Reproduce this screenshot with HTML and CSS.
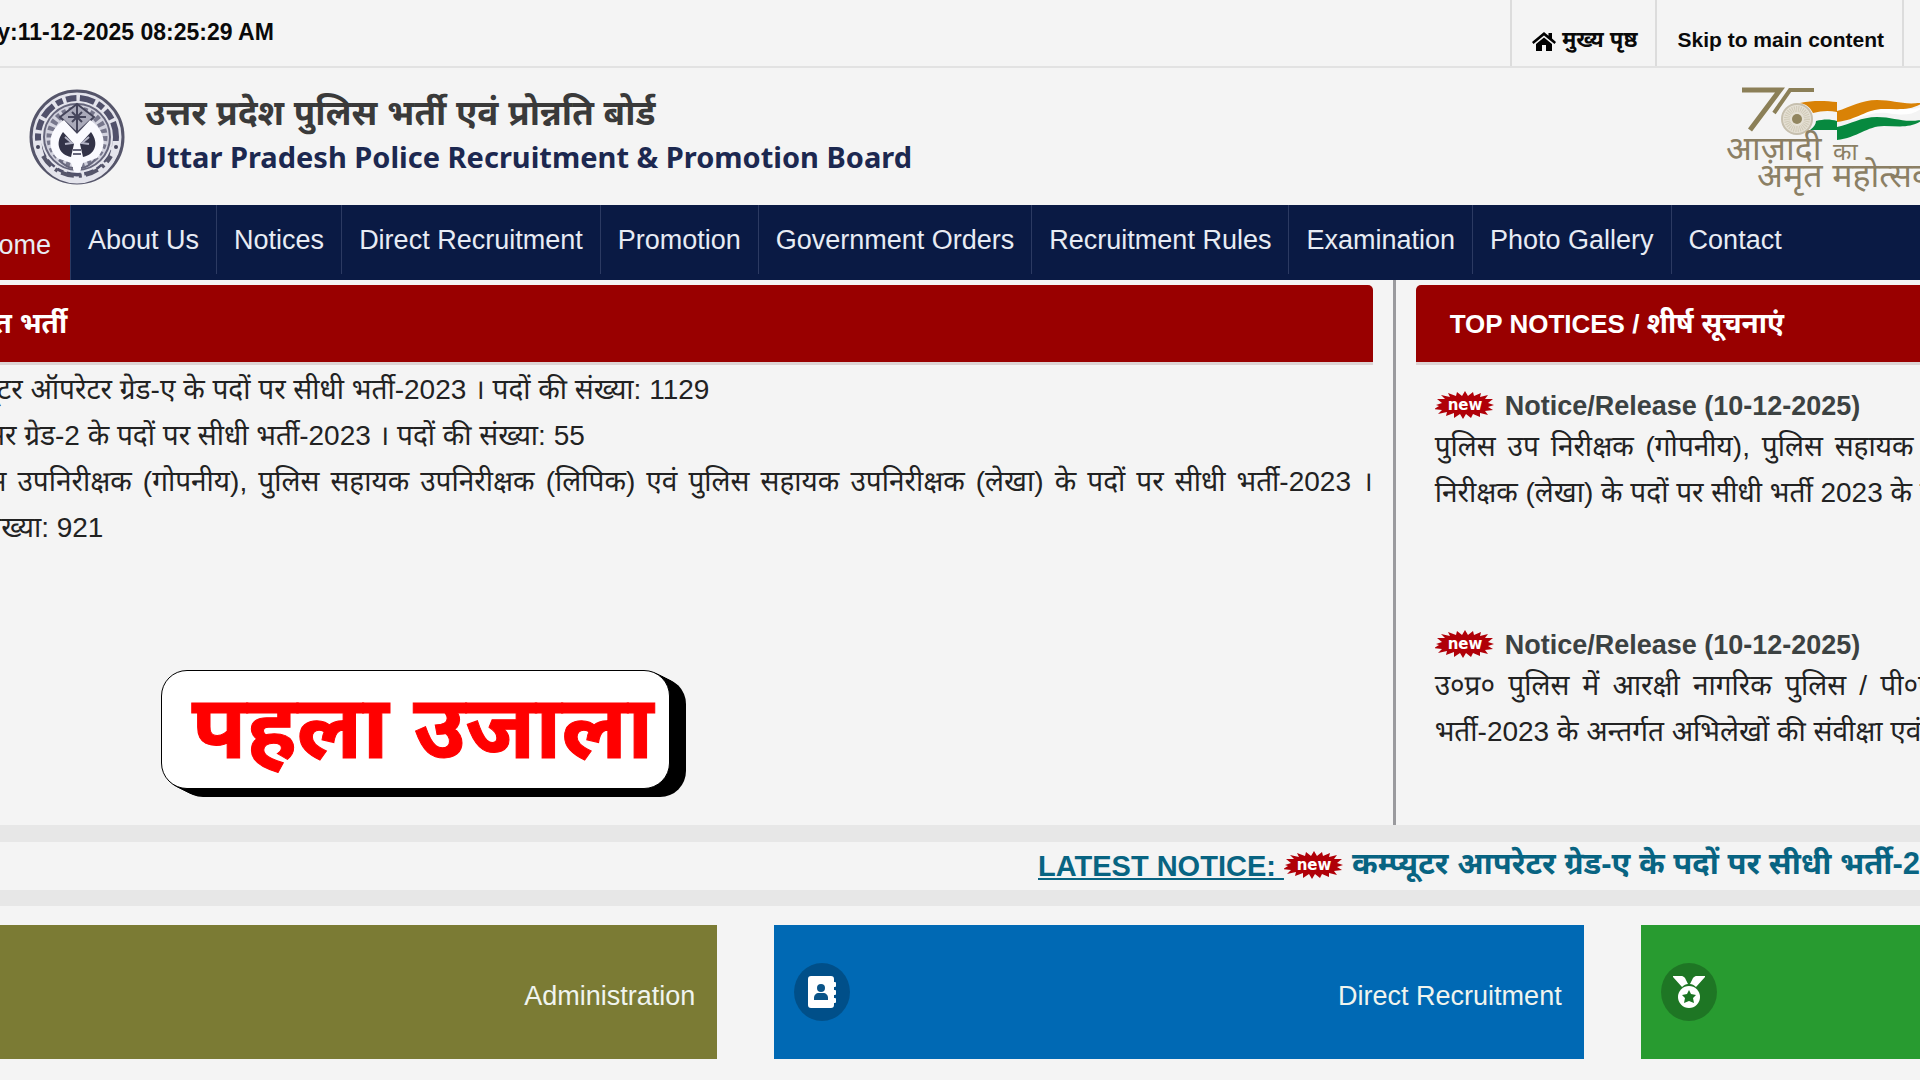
FILE: index.html
```html
<!DOCTYPE html>
<html lang="hi">
<head>
    <meta charset="UTF-8">
    <meta name="viewport" content="width=device-width, initial-scale=1.0">
    <title>Uttar Pradesh Police Recruitment &amp; Promotion Board</title>
    <link rel="stylesheet" href="styles.css">
</head>
<body>
    <!-- Shared "new" sticker -->
    <svg class="sprite" aria-hidden="true">
        <symbol id="new-badge" viewBox="0 0 60 30">
            <path fill="#b00008" d="M1 14l6-2-5-4 8 0-4-4 9 2-2-4 8 3 1-4 5 4 3-5 3 5 5-4 1 4 7-3-1 4 8-2-3 4 8 0-5 4 6 2-6 2 5 3-8 1 3 4-8-2 0 4-7-3-2 4-5-4-3 5-3-5-6 4 0-5-8 3 1-4-9 2 4-4-8-1 5-3z"/>
            <text x="30" y="19" text-anchor="middle" fill="#fff" font-family="DejaVu Sans" font-size="15">new</text>
        </symbol>
    </svg>

    <div class="page">
        <!-- Top Bar -->
        <div class="top-bar">
            <span class="today">Today:11-12-2025 08:25:29 AM</span>
            <div class="top-links">
                <a class="home-link" href="#">
                    <svg width="24" height="20" viewBox="0 0 24 20" aria-hidden="true">
                        <path d="M12 1L0 11l1.500 2L12 4.500 22.500 13 24 11l-4-3.400V2h-3.500v2.800z"/>
                        <path d="M12 6.500L4 13v7h6v-6h4v6h6v-7z"/>
                    </svg>
                    मुख्य पृष्ठ
                </a>
                <a href="#main">Skip to main content</a>
            </div>
        </div>

        <!-- Header -->
        <header class="header">
            <svg class="emblem" viewBox="0 0 96 96" role="img" aria-label="Board emblem">
                <circle cx="48" cy="48" r="46" fill="#e4e4ec" stroke="#55556a" stroke-width="3"/>
                <circle cx="48" cy="48" r="39" fill="none" stroke="#50506a" stroke-width="6" stroke-dasharray="9 3 13 3 6 3" pathLength="210"/>
                <path d="M9 52a39 39 0 0 0 78 0" fill="none" stroke="#e4e4ec" stroke-width="7"/>
                <path d="M14 67a39 39 0 0 0 68 0" fill="none" stroke="#55556a" stroke-width="4" stroke-dasharray="13 5 3 4"/>
                <circle cx="9" cy="58" r="2" fill="#44445a"/>
                <circle cx="87" cy="58" r="2" fill="#44445a"/>
                <circle cx="48" cy="48" r="33" fill="#d2d2de" stroke="#66667c" stroke-width="2"/>
                <circle cx="48" cy="48" r="27" fill="none" stroke="#77778c" stroke-width="7" stroke-dasharray="4 3"/>
                <path d="M48 15l17 13-17 16-17-16z" fill="#aaaaba" stroke="#44445a" stroke-width="2"/>
                <path d="M48 15v29M39 28h18M43 23l10 10M53 23L43 33" stroke="#44445a" stroke-width="2"/>
                <path d="M35 31c-15 10-18 26-7 38l14 5 3 9h6l3-9 14-5c11-12 8-28-7-38l-13 14z" fill="#fafaff"/>
                <path d="M34 43c-9 12-3 23 8 25l3-13zM62 43c9 12 3 23-8 25l-3-13z" fill="#333348"/>
                <path d="M36 48l7 6-7 1M60 48l-7 6 7 1" stroke="#b4b4c6" stroke-width="2" fill="none"/>
                <path d="M30 71c6 6 11 8 14 8M66 71c-6 6-11 8-14 8M44 61h8M44 65h8" stroke="#66667c" stroke-width="2" fill="none"/>
            </svg>
            <div class="board-name">
                <h1>उत्तर प्रदेश पुलिस भर्ती एवं प्रोन्नति बोर्ड</h1>
                <h2>Uttar Pradesh Police Recruitment &amp; Promotion Board</h2>
            </div>
            <svg class="amrit" viewBox="0 -6 240 116" role="img" aria-label="आज़ादी का अमृत महोत्सव">
                <path d="M16 5h38L24 45" fill="none" stroke="#8b7f57" stroke-width="5"/>
                <path d="M48 28L64 5h24" fill="none" stroke="#8b7f57" stroke-width="4"/>
                <circle cx="71" cy="34" r="15" fill="#e5e0d4" stroke="#c6bfae" stroke-width="2"/>
                <circle cx="71" cy="34" r="10" fill="none" stroke="#d0cab8" stroke-width="6" stroke-dasharray="1 1"/>
                <circle cx="71" cy="34" r="5" fill="#91855f"/>
                <path d="M74 18c14-3 26-2 37-1v10c-9-2-16-1-24 1-3-6-7-9-13-10z" fill="#d98206"/>
                <path d="M111 36c18-2 28-14 50-14 14 0 23 5 37-1-9 9-20 10-37 7-18-2-28 8-50 8z" fill="#fff"/>
                <path d="M111 26c14-4 24-11 40-11 18 0 28 6 47 2-12 9-25 7-40 7-18 0-27 11-47 13z" fill="#d98206"/>
                <path d="M90 36c8-2 14-2 21 0v9H84c4-3 6-6 6-9z" fill="#07893f"/>
                <path d="M111 42c14-3 24-10 40-10 18 0 28 7 47 2-12 10-25 7-40 7-17 0-27 12-47 14z" fill="#07893f"/>
                <text x="0" y="75" class="amrit-text">आज़ादी</text>
                <text x="107" y="75" class="amrit-small">का</text>
                <text x="31" y="102" class="amrit-text">अमृत महोत्सव</text>
            </svg>
        </header>

        <!-- Main Navigation -->
        <nav class="nav">
            <a class="active" href="#">Home</a>
            <a href="#">About Us</a>
            <a href="#">Notices</a>
            <a href="#">Direct Recruitment</a>
            <a href="#">Promotion</a>
            <a href="#">Government Orders</a>
            <a href="#">Recruitment Rules</a>
            <a href="#">Examination</a>
            <a href="#">Photo Gallery</a>
            <a href="#">Contact</a>
        </nav>

        <!-- Recruitment and Notices -->
        <main class="main" id="main">
            <section class="recruitment">
                <h3><span>प्रचलित भर्ती</span></h3>
                <p>(1) कम्प्यूटर ऑपरेटर ग्रेड-ए के पदों पर सीधी भर्ती-2023 । पदों की संख्या: 1129</p>
                <p>(2) प्रोग्रामर ग्रेड-2 के पदों पर सीधी भर्ती-2023 । पदों की संख्या: 55</p>
                <p>(3) पुलिस उपनिरीक्षक (गोपनीय), पुलिस सहायक उपनिरीक्षक (लिपिक) एवं पुलिस सहायक उपनिरीक्षक (लेखा) के पदों पर सीधी भर्ती-2023 । <span class="posts">पदों की संख्या: 921</span></p>
                <div class="watermark">पहला उजाला</div>
            </section>

            <section class="notices">
                <h3>TOP NOTICES / <span>शीर्ष सूचनाएं</span></h3>
                <article class="notice">
                    <h4><svg class="new"><use href="#new-badge"/></svg>Notice/Release (10-12-2025)</h4>
                    <p>
                        <span class="line">पुलिस उप निरीक्षक (गोपनीय), पुलिस सहायक उप निरीक्षक (लिपिक) / पुलिस सहायक उप</span>
                        निरीक्षक (लेखा) के पदों पर सीधी भर्ती 2023 के सम्बन्ध में।
                    </p>
                </article>
                <article class="notice">
                    <h4><svg class="new"><use href="#new-badge"/></svg>Notice/Release (10-12-2025)</h4>
                    <p>
                        <span class="line">उ०प्र० पुलिस में आरक्षी नागरिक पुलिस / पी०ए०सी० एवं फायरमैन के कुल पदों पर सीधी</span>
                        भर्ती-2023 के अन्तर्गत अभिलेखों की संवीक्षा एवं शारीरिक परीक्षा।
                    </p>
                </article>
            </section>
        </main>

        <!-- Latest Notice -->
        <div class="latest">
            <a href="#">LATEST NOTICE: </a>
            <svg class="new"><use href="#new-badge"/></svg>
            <span>कम्प्यूटर आपरेटर ग्रेड-ए के पदों पर सीधी भर्ती-2023</span>
        </div>

        <!-- Tiles -->
        <div class="tiles">
            <a class="tile olive" href="#">
                <span>Administration</span>
            </a>
            <a class="tile blue" href="#">
                <i class="tile-icon">
                    <svg width="28" height="32" viewBox="0 0 28 32" aria-hidden="true">
                        <path fill="#fff" d="M3 0h20a3 3 0 0 1 3 3v3h1a1 1 0 0 1 1 1v3a1 1 0 0 1-1 1h-1v3h1a1 1 0 0 1 1 1v3a1 1 0 0 1-1 1h-1v3h1a1 1 0 0 1 1 1v3a1 1 0 0 1-1 1h-1v2a3 3 0 0 1-3 3H3a3 3 0 0 1-3-3V3a3 3 0 0 1 3-3z"/>
                        <circle cx="13" cy="12" r="4" fill="#0a5488"/>
                        <path fill="#0a5488" d="M6 24v-2c0-3 2-5 5-5h4c3 0 5 2 5 5v2z"/>
                    </svg>
                </i>
                <span>Direct Recruitment</span>
            </a>
            <a class="tile green" href="#">
                <i class="tile-icon">
                    <svg width="32" height="32" viewBox="0 0 32 32" aria-hidden="true">
                        <path fill="#fff" d="M0 0h9c1 0 2 1 3 2l3 6c-2 0-4 1-6 3L0 1zM32 0h-9c-1 0-2 1-3 2l-3 6c2 0 4 1 6 3l9-10z"/>
                        <circle cx="16" cy="21" r="11" fill="#fff"/>
                        <path fill="#1b7423" d="M16 14l2 4 5 1-3 3 1 5-5-2-5 2 1-5-3-3 5-1z"/>
                    </svg>
                </i>
                <span>Examination</span>
            </a>
        </div>
    </div>
</body>
</html>
```
FILE: styles.css
```css
/* General Body Styling */
* {
    box-sizing: border-box;
}

body {
    margin: 0;
    overflow: hidden;
    background-color: #f4f4f4;
    font-family: "Liberation Sans", "Noto Sans Devanagari", "Noto Sans", sans-serif;
    font-size: 28px;
    color: #222;
}

h1, h2, h3, h4, p {
    margin: 0;
}

a {
    color: inherit;
    text-decoration: none;
}

.sprite {
    display: none;
}

/* The page is wider than the window on both sides */
.page {
    margin: 0 -544px 0 -100px;
}

/* Top Bar */
.top-bar {
    display: flex;
    justify-content: space-between;
    height: 68px;
    padding: 0 560px 0 44px;
    border-bottom: 2px solid #e2e2e2;
    font-weight: bold;
    color: #0a0a0a;
}

.today {
    font-size: 23px;
    line-height: 64px;
}

.top-links {
    display: flex;
    border-right: 2px solid #dcdcdc;
    font-size: 21px;
}

.top-links a {
    display: flex;
    align-items: center;
    gap: 6px;
    padding: 14px 18px 0 20px;
    border-left: 2px solid #dcdcdc;
}

.top-links .home-link {
    padding-top: 16px;
    font-size: 22px;
}

/* Header */
.header {
    display: flex;
    align-items: center;
    height: 137px;
    padding: 0 498px 0 129px;
}

.emblem {
    width: 96px;
    height: 96px;
}

.board-name {
    flex: 1;
    margin-left: 20px;
    padding-bottom: 6px;
}

.board-name h1 {
    font-size: 35px;
    line-height: 46px;
    color: #3a3a3a;
}

.board-name h2 {
    font-family: "Noto Sans", sans-serif;
    font-size: 29px;
    line-height: 42px;
    color: #1c2850;
}

.amrit {
    width: 240px;
    height: 116px;
    overflow: visible;
}

.amrit-text {
    font-size: 34px;
    fill: #8b7f64;
}

.amrit-small {
    font-size: 24px;
    fill: #8b7f64;
}

/* Navigation */
.nav {
    display: flex;
    height: 75px;
    padding-left: 62px;
    background-color: #0a1a44;
    color: #e8ecf4;
    font-size: 27px;
    line-height: 70px;
}

.nav a {
    padding: 0 17px;
    margin-bottom: 6px;
    border-right: 1px solid #2c3a62;
}

.nav a:last-child {
    border-right: none;
}

.nav .active {
    margin-bottom: 0;
    padding-right: 19px;
    background-color: #990000;
    line-height: 80px;
}

/* Recruitment and Notices */
.main {
    display: grid;
    grid-template-columns: 7fr 5fr;
    height: 545px;
}

.main h3 {
    height: 77px;
    border-radius: 5px 5px 0 0;
    box-shadow: 0 3px 0 #dcd4d4;
    background-color: #990000;
    color: #fff;
    font-size: 26px;
    line-height: 77px;
}

.main h3 span {
    font-size: 28px;
}

.main p {
    line-height: 46px;
    text-align: justify;
}

.recruitment {
    position: relative;
    padding: 5px 20px 0 0;
    border-right: 3px solid #9a9a9e;
}

.recruitment h3 {
    margin-bottom: 5px;
    padding-left: 29px;
}

.posts {
    white-space: nowrap;
}

.watermark {
    position: absolute;
    left: 261px;
    top: 390px;
    width: 509px;
    height: 119px;
    border: 1px solid #000;
    border-radius: 26px;
    box-shadow: 2px 1px 0 #000, 4px 2px 0 #000, 6px 3px 0 #000, 8px 4px 0 #000, 10px 5px 0 #000, 12px 6px 0 #000, 14px 7px 0 #000, 16px 8px 0 #000;
    background-color: #fff;
    color: #ff0000;
    font-size: 89px;
    font-weight: bold;
    line-height: 112px;
    text-align: center;
    text-indent: 14px;
    white-space: nowrap;
    -webkit-text-stroke: 1px #ff0000;
}

.notices {
    padding: 5px 24px 0 20px;
}

.notices h3 {
    margin-bottom: 26px;
    padding-left: 34px;
}

.notice {
    height: 195px;
    margin-bottom: 44px;
    padding: 0 61px 0 19px;
}

.notice:last-child {
    margin-bottom: 0;
}

.notice h4 {
    display: flex;
    align-items: center;
    gap: 10px;
    height: 36px;
    font-size: 27px;
    color: #3c4242;
}

.line {
    display: block;
    text-align-last: justify;
}

.new {
    width: 60px;
    height: 30px;
}

/* Latest Notice */
.latest {
    display: flex;
    align-items: center;
    height: 81px;
    padding-left: 1138px;
    border-top: 17px solid #e7e7e7;
    border-bottom: 16px solid #e7e7e7;
    font-size: 29px;
    font-weight: bold;
    color: #086482;
    white-space: pre;
}

.latest a {
    text-decoration: underline;
}

.latest span {
    margin-left: 8px;
    font-size: 31px;
}

/* Tiles */
.tiles {
    display: grid;
    grid-template-columns: repeat(3, 1fr);
    gap: 57px;
    padding: 19px 14px 21px 8px;
}

.tile {
    display: flex;
    align-items: center;
    height: 134px;
    padding: 0 22px 0 20px;
    color: #f0f4ee;
    font-size: 27px;
}

.tile span {
    margin-left: auto;
    padding-top: 8px;
}

.tile-icon {
    display: flex;
    align-items: center;
    justify-content: center;
    width: 56px;
    height: 58px;
    border-radius: 50%;
    background-color: rgba(0, 0, 0, 0.24);
}

.olive {
    background-color: #7b7b34;
}

.blue {
    background-color: #0069b4;
}

.green {
    background-color: #289b30;
}
```
